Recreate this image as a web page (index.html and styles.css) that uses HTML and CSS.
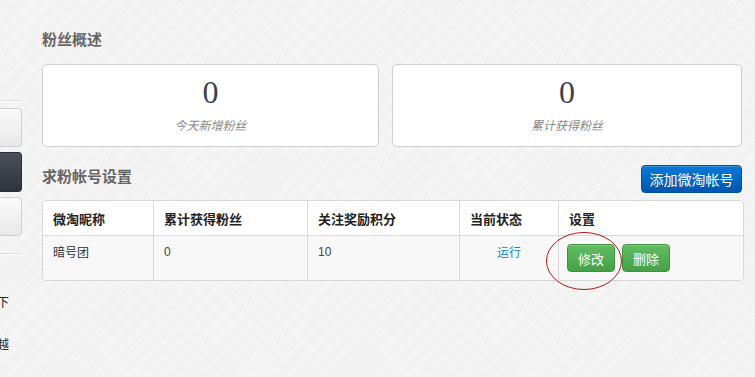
FILE: index.html
```html
<!DOCTYPE html>
<html lang="zh">
<head>
<meta charset="utf-8">
<title>粉丝概述</title>
<link rel="stylesheet" href="styles.css">
</head>
<body>
<div class="page">
  <aside class="sidebar">
    <div class="rule rule-top"></div>
    <div class="side-btn light"></div>
    <div class="side-btn dark"></div>
    <div class="side-btn light"></div>
    <div class="rule rule-bottom"></div>
    <p class="side-text first">下</p>
    <p class="side-text">越</p>
  </aside>
  <main class="main">
    <h2 class="section-title">粉丝概述</h2>
    <div class="stats">
      <div class="stat-card">
        <div class="stat-num">0</div>
        <div class="stat-label">今天新增粉丝</div>
      </div>
      <div class="stat-card">
        <div class="stat-num">0</div>
        <div class="stat-label">累计获得粉丝</div>
      </div>
    </div>
    <div class="section-head">
      <h2 class="section-title">求粉帐号设置</h2>
      <button class="btn btn-primary">添加微淘帐号</button>
    </div>
    <table class="acct-table">
      <colgroup>
        <col class="c1"><col class="c2"><col class="c3"><col class="c4"><col class="c5">
      </colgroup>
      <thead>
        <tr>
          <th>微淘昵称</th>
          <th>累计获得粉丝</th>
          <th>关注奖励积分</th>
          <th>当前状态</th>
          <th>设置</th>
        </tr>
      </thead>
      <tbody>
        <tr>
          <td>暗号团</td>
          <td class="num">0</td>
          <td class="num">10</td>
          <td class="status"><a class="status-link">运行</a></td>
          <td class="actions">
            <div class="action-wrap">
              <button class="btn btn-success">修改</button>
              <button class="btn btn-success">删除</button>
              <svg class="mark" width="78" height="60" viewBox="0 0 78 60"><ellipse cx="39" cy="30" rx="37.5" ry="28.5" fill="none" stroke="#b0141c" stroke-width="1"/></svg>
            </div>
          </td>
        </tr>
      </tbody>
    </table>
  </main>
</div>
</body>
</html>
```
FILE: styles.css
```css
* { box-sizing: border-box; }
html, body { margin: 0; padding: 0; }
body {
  background-color: #f3f3f3;
  background-image:
    repeating-linear-gradient(45deg, rgba(0,0,0,0.018) 0 1px, transparent 1px 3px),
    repeating-linear-gradient(-45deg, rgba(255,255,255,0.5) 0 1px, transparent 1px 3px);
  font-family: "Noto Sans CJK SC", "Liberation Sans", sans-serif;
  color: #333;
  width: 755px;
  height: 377px;
  overflow: hidden;
}
.page { display: flex; gap: 20px; }

.sidebar { width: 22px; flex: none; padding-top: 100px; overflow: hidden; }
.rule { height: 2px; border-top: 1px solid #dcdcdc; border-bottom: 1px solid #fff; }
.rule-top { margin-bottom: 6px; }
.side-btn {
  height: 39px;
  margin-bottom: 5px;
  border: 1px solid #d0d0d0;
  border-left: none;
  border-radius: 0 4px 4px 0;
}
.side-btn.light { background: linear-gradient(#fafafa, #e9e9e9); }
.side-btn.dark { background: linear-gradient(#4b505a, #2f333b); border-color: #2b2e34; height: 40px; }
.rule-bottom { margin-top: 17px; }
.side-text { margin: 0; font-size: 12px; line-height: 14px; color: #222; margin-left: -3px; }
.side-text.first { margin-top: 40px; margin-bottom: 28px; }

.main { width: 700px; flex: none; padding-top: 29px; }
.section-title {
  margin: 0;
  font-size: 15px;
  line-height: 20px;
  font-weight: bold;
  color: #666;
}
.stats {
  display: grid;
  grid-template-columns: 337px 350px;
  gap: 13px;
  margin-top: 15px;
}
.stat-card {
  height: 83px;
  background: #fff;
  border: 1px solid #cfcfcf;
  border-radius: 5px;
  text-align: center;
  padding-top: 9px;
}
.stat-num {
  font-family: "Liberation Serif", serif;
  font-size: 32px;
  line-height: 36px;
  color: #3b4250;
}
.stat-label {
  margin-top: 7px;
  font-size: 12px;
  line-height: 16px;
  font-style: italic;
  color: #888;
}
.section-head {
  display: flex;
  justify-content: space-between;
  align-items: flex-start;
  margin-top: 18px;
}
.section-head .section-title { margin-top: 1px; }

.btn {
  font-family: "Noto Sans CJK SC", sans-serif;
  color: #fff;
  border-radius: 4px;
  cursor: pointer;
  padding: 0;
}
.btn-primary {
  width: 101px;
  height: 28px;
  font-size: 14px;
  background: linear-gradient(#0a7ad6, #0055b0);
  border: 1px solid #0050a0;
  box-shadow: inset 0 1px 0 rgba(255,255,255,0.2);
}
.btn-success {
  width: 48px;
  height: 28px;
  font-size: 13px;
  background: linear-gradient(#62bd62, #47a047);
  border: 1px solid #3f923f;
  box-shadow: inset 0 1px 0 rgba(255,255,255,0.2);
}

.acct-table {
  margin-top: 7px;
  width: 700px;
  table-layout: fixed;
  border-collapse: separate;
  border-spacing: 0;
  border: 1px solid #d8d8d8;
  border-radius: 4px;
  background: #f8f8f8;
}
.c1 { width: 110px; }
.c2 { width: 154px; }
.c3 { width: 152px; }
.c4 { width: 99px; }
.c5 { width: 185px; }
.acct-table th, .acct-table td { text-align: left; }
.acct-table th + th, .acct-table td + td { border-left: 1px solid #d8d8d8; }
.acct-table th {
  height: 35px;
  padding: 0 10px;
  font-size: 13px;
  font-weight: bold;
  color: #222;
  background: #fff;
  border-bottom: 1px solid #d8d8d8;
}
.acct-table th:first-child { border-top-left-radius: 3px; }
.acct-table th:last-child { border-top-right-radius: 3px; }
.acct-table td:first-child { border-bottom-left-radius: 3px; }
.acct-table td:last-child { border-bottom-right-radius: 3px; }
.acct-table td {
  height: 44px;
  vertical-align: top;
  padding: 8px 10px 0;
  font-size: 12px;
  line-height: 16px;
  color: #333;
  background: #f8f8f8;
}
.acct-table td.num { font-family: "Liberation Sans", sans-serif; color: #444; }
.acct-table td.status { text-align: center; }
.status-link { color: #1a84c0; text-decoration: none; }
.acct-table td.actions { padding-left: 8px; }
.action-wrap { position: relative; display: flex; gap: 7px; }
.mark { position: absolute; left: -22px; top: -13px; pointer-events: none; }
```
